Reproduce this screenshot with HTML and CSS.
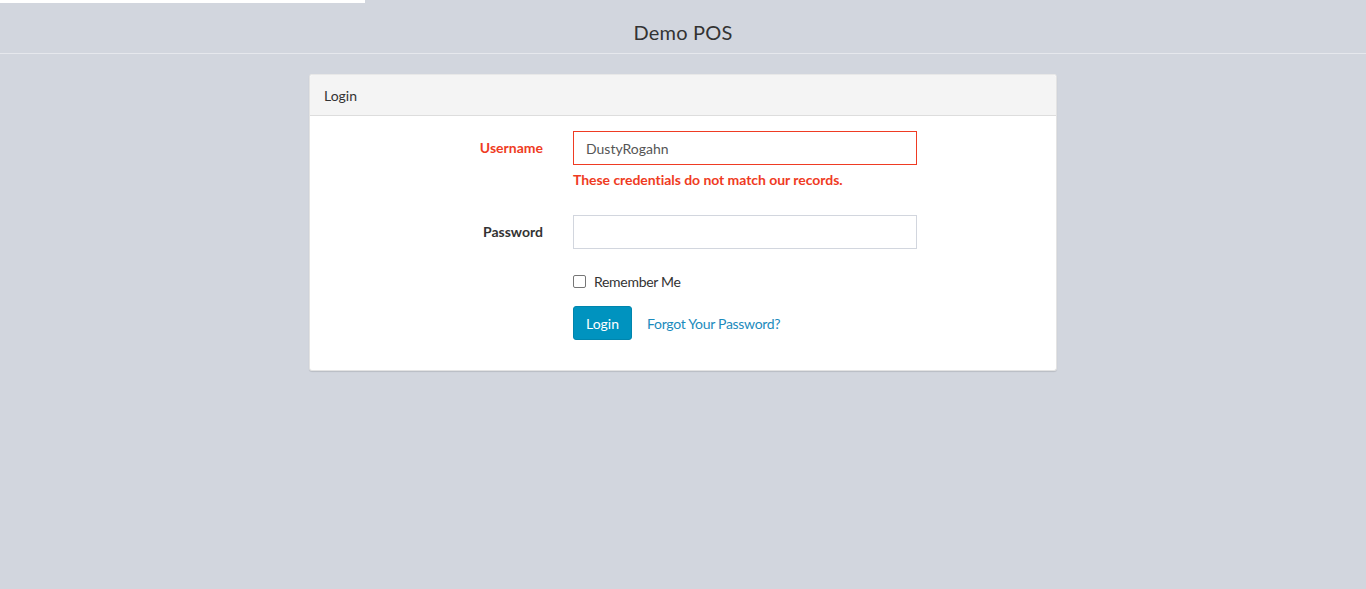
FILE: index.html
```html
<!DOCTYPE html>
<html>
<head>
<meta charset="utf-8">
<title>Demo POS</title>
<link rel="stylesheet" href="styles.css">
</head>
<body>
<div class="pace-bar"></div>
<header class="topbar"><span class="brand">Demo POS</span></header>
<main class="container">
  <section class="panel">
    <div class="panel-heading">Login</div>
    <form class="panel-body">
      <div class="form-group has-error">
        <label class="control-label" for="username">Username</label>
        <div class="field">
          <input id="username" class="form-control" type="text" value="DustyRogahn">
          <span class="help-block">These credentials do not match our records.</span>
        </div>
      </div>
      <div class="form-group">
        <label class="control-label" for="password">Password</label>
        <div class="field">
          <input id="password" class="form-control" type="password">
        </div>
      </div>
      <div class="form-group">
        <div class="spacer"></div>
        <div class="field">
          <label class="checkbox"><span class="box"></span>Remember Me</label>
        </div>
      </div>
      <div class="form-group last">
        <div class="spacer"></div>
        <div class="field actions">
          <button type="button" class="btn">Login</button>
          <a class="link" href="#">Forgot Your Password?</a>
        </div>
      </div>
    </form>
  </section>
</main>
</body>
</html>
```

FILE: styles.css
```css
* { box-sizing: border-box; }
html, body { margin: 0; padding: 0; }
body {
  background: #d2d6de;
  font-family: Lato, "Open Sans", "Liberation Sans", sans-serif;
  font-size: 14px;
  color: #333;
  min-height: 589px;
}
.pace-bar {
  position: absolute;
  top: 0;
  left: 0;
  width: 365px;
  height: 3px;
  background: #fff;
}
.topbar {
  height: 54px;
  border-bottom: 1px solid #e6e8ed;
  display: flex;
  align-items: center;
  justify-content: center;
  padding-top: 10px;
}
.brand {
  font-size: 20px;
  color: #333;
  letter-spacing: 0.2px;
}
.container {
  display: flex;
  justify-content: center;
  padding-top: 20px;
}
.panel {
  width: 748px;
  background: #fff;
  border-radius: 3px;
  box-shadow: 0 1px 1px rgba(0,0,0,0.12);
  border: 1px solid #e3e3e3;
  border-top-color: #e8e8e8;
}
.panel-heading {
  background: #f4f4f4;
  height: 41px;
  border-bottom: 1px solid #ddd;
  padding: 0 14px;
  display: flex;
  align-items: center;
  font-size: 14px;
  color: #333;
  border-radius: 3px 3px 0 0;
}
.panel-body {
  padding: 15px 0 15px;
  margin: 0;
}
.form-group {
  display: flex;
  margin-bottom: 15px;
}
.control-label, .spacer {
  width: 248px;
  flex: none;
  padding: 0 15px;
  text-align: right;
  font-weight: bold;
  font-size: 14px;
  line-height: 34px;
  height: 34px;
  color: #333;
}
.spacer { height: auto; }
.field {
  width: 374px;
  padding: 0 15px;
  display: flex;
  flex-direction: column;
}
.form-control {
  width: 344px;
  height: 34px;
  border: 1px solid #d2d6de;
  border-radius: 0;
  padding: 6px 12px;
  font-family: inherit;
  font-size: 14px;
  color: #555;
  outline: none;
  background: #fff;
}
.has-error .control-label { color: #ef3b23; }
.has-error .form-control { border-color: #ef3b23; }
.help-block {
  display: block;
  color: #ef3b23;
  font-weight: bold;
  font-size: 14px;
  margin-top: 5px;
  margin-bottom: 10px;
  line-height: 20px;
  letter-spacing: -0.05px;
}
.checkbox {
  display: flex;
  align-items: center;
  gap: 8px;
  height: 20px;
  margin-top: 7px;
  color: #333;
  font-size: 14px;
  font-weight: normal;
  letter-spacing: -0.3px;
}
.box {
  width: 13px;
  height: 13px;
  border: 1px solid #767676;
  border-radius: 2px;
  background: #fff;
}
.form-group.last { margin-bottom: 15px; }
.actions {
  flex-direction: row;
  align-items: center;
  gap: 15px;
}
.btn {
  height: 34px;
  padding: 0 12px;
  background: #0093bf;
  border: 1px solid #0085ad;
  border-radius: 3px;
  color: #fff;
  font-family: inherit;
  font-size: 14px;
  cursor: pointer;
}
.link {
  color: #1c8bbd;
  text-decoration: none;
  font-size: 14px;
  letter-spacing: -0.3px;
}
```
